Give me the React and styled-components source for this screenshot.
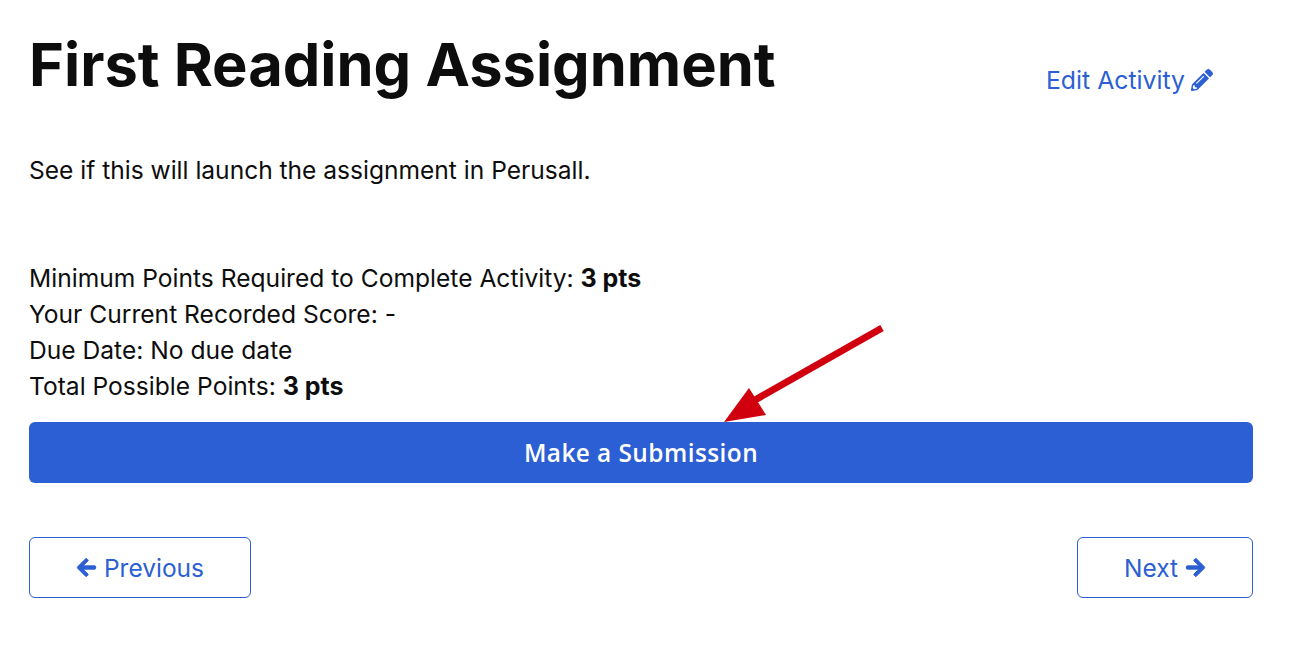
import React from 'react';
import styled, { createGlobalStyle } from 'styled-components';
import { FaArrowLeft, FaArrowRight, FaPencilAlt } from 'react-icons/fa';

const GlobalStyle = createGlobalStyle`
  html, body {
    margin: 0;
    padding: 0;
    background: #ffffff;
  }
`;

const Page = styled.div`
  position: relative;
  width: 1312px;
  height: 646px;
  box-sizing: border-box;
  padding: 26px 59px 0 29px;
  font-family: Inter, "Liberation Sans", sans-serif;
  color: #0d0d0d;
  overflow: hidden;
`;

const Header = styled.header`
  display: flex;
  justify-content: space-between;
  align-items: flex-start;
  height: 78px;
`;

const Title = styled.h1`
  margin: 0;
  font-size: 59.6px;
  line-height: 76px;
  font-weight: 700;
  letter-spacing: 0;
`;

const EditLink = styled.a`
  display: flex;
  align-items: center;
  gap: 6px;
  margin: 38px 40px 0 0;
  font-size: 24.8px;
  line-height: 32px;
  color: #2b5fd3;
  text-decoration: none;
`;

const Description = styled.p`
  margin: 48px 0 0;
  font-size: 24.55px;
  line-height: 36px;
`;

const Facts = styled.div`
  margin-top: 72px;
  font-size: 24.6px;
  line-height: 36px;
`;

const Fact = styled.div`
  b {
    font-weight: 700;
    font-size: 25px;
  }
`;

const SubmitButton = styled.button`
  display: block;
  width: 100%;
  height: 61px;
  margin-top: 18px;
  border: 0;
  border-radius: 6px;
  background: #2b5fd3;
  color: #ffffff;
  font-family: "Open Sans", sans-serif;
  font-size: 24.4px;
  font-weight: 600;
  letter-spacing: 0.45px;
`;

const Pager = styled.nav`
  display: flex;
  justify-content: space-between;
  margin-top: 54px;
`;

const PagerButton = styled.button`
  display: flex;
  align-items: center;
  justify-content: center;
  gap: 7px;
  width: ${(p) => p.$width}px;
  height: 61px;
  border: 1px solid #2b5fd3;
  border-radius: 6px;
  background: #ffffff;
  color: #2b5fd3;
  font-family: Inter, sans-serif;
  font-size: 24.5px;

  svg {
    stroke: currentColor;
    stroke-width: 24px;
    stroke-linejoin: round;
  }
`;

const Callout = styled.svg`
  position: absolute;
  left: 700px;
  top: 310px;
`;

export default function App() {
  return (
    <Page>
      <GlobalStyle />
      <Header>
        <Title>First Reading Assignment</Title>
        <EditLink href="#">
          Edit Activity <FaPencilAlt size={22} />
        </EditLink>
      </Header>
      <Description>See if this will launch the assignment in Perusall.</Description>
      <Facts>
        <Fact>
          Minimum Points Required to Complete Activity: <b>3 pts</b>
        </Fact>
        <Fact>Your Current Recorded Score: -</Fact>
        <Fact>Due Date: No due date</Fact>
        <Fact>
          Total Possible Points: <b>3 pts</b>
        </Fact>
      </Facts>
      <SubmitButton>Make a Submission</SubmitButton>
      <Pager>
        <PagerButton $width={222}>
          <FaArrowLeft size={21} /> Previous
        </PagerButton>
        <PagerButton $width={176}>
          Next <FaArrowRight size={21} />
        </PagerButton>
      </Pager>
      <Callout width="200" height="130" viewBox="0 0 200 130">
        <path d="M182 18 L55 90" stroke="#d0000f" strokeWidth="7" fill="none" />
        <path d="M24 112 L49 78 L66 105 Z" fill="#d0000f" />
      </Callout>
    </Page>
  );
}
